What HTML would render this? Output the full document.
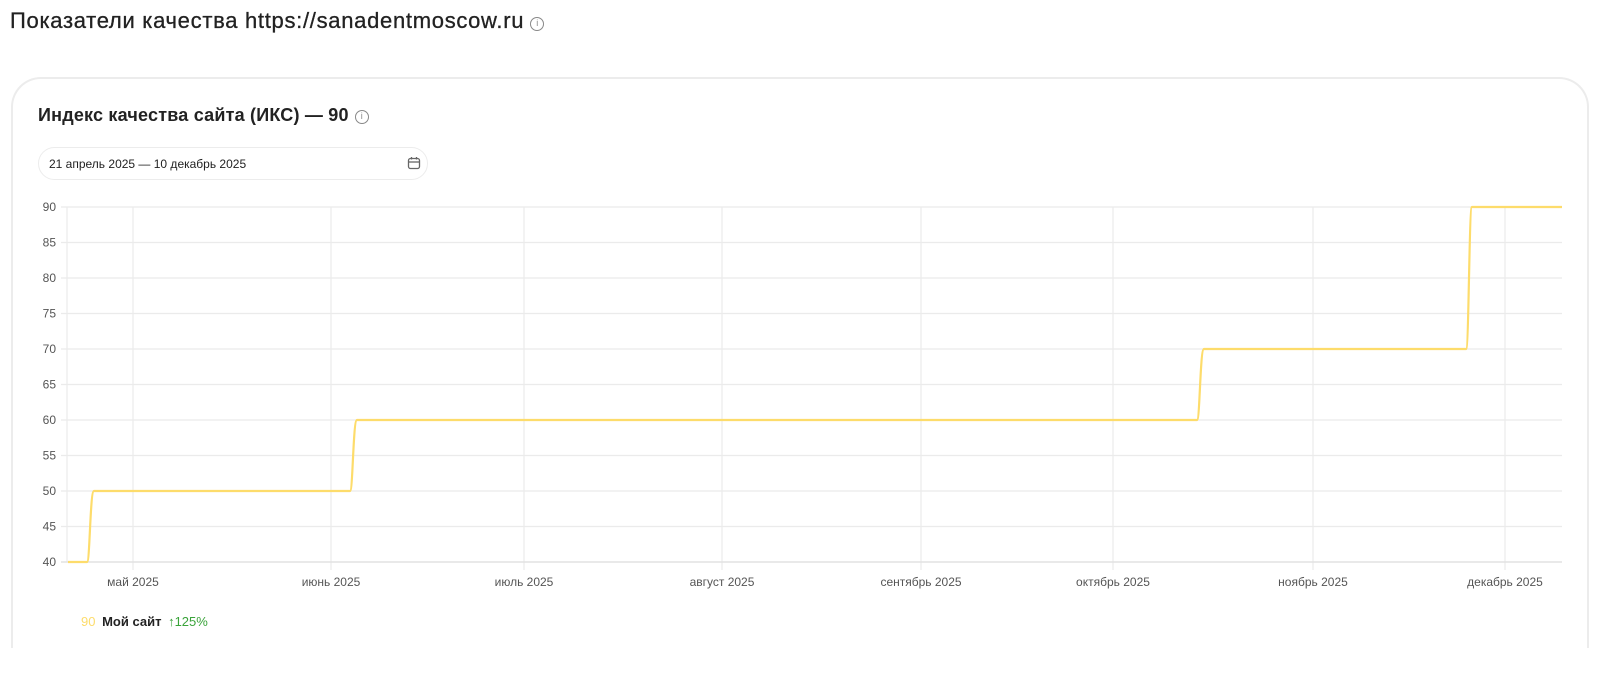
<!DOCTYPE html>
<html><head><meta charset="utf-8">
<style>
*{margin:0;padding:0;box-sizing:border-box}
body{width:1598px;height:688px;background:#fff;font-family:"Liberation Sans",Arial,sans-serif;position:relative;overflow:hidden;color:#222}
.title{position:absolute;left:10px;top:8px;font-size:22px;color:#222;white-space:nowrap;letter-spacing:0.7px;-webkit-text-stroke:0.3px #222}
.card{position:absolute;left:11px;top:77px;width:1578px;height:600px;border:2px solid #ececec;border-bottom:none;border-radius:30px 30px 0 0}
.fade{position:absolute;left:0;top:648px;width:1598px;height:40px;background:#fff}
.sub{position:absolute;left:38px;top:105px;font-size:18px;font-weight:bold;color:#222;white-space:nowrap;letter-spacing:0.2px}
.pill{position:absolute;left:38px;top:147px;width:390px;height:33px;border:1px solid #ececec;border-radius:17px;font-size:12px;color:#222;padding:9px 0 0 10px}
.info{display:inline-block;width:14px;height:14px;border:1.3px solid #888;border-radius:50%;font-size:9px;line-height:11px;text-align:center;color:#888;font-weight:normal;vertical-align:2px;margin-left:6px;letter-spacing:0;-webkit-text-stroke:0}
svg{position:absolute;left:0;top:0}
.legend{position:absolute;left:81px;top:614px;font-size:13px;white-space:nowrap}
</style></head><body>
<div class="title">Показатели качества https://sanadentmoscow.ru<span class="info">i</span></div>
<div class="card"></div>
<div class="fade"></div>
<div class="sub">Индекс качества сайта (ИКС) — 90<span class="info">i</span></div>
<div class="pill">21 апрель 2025 — 10 декабрь 2025
<svg style="left:368px;top:8px" width="14" height="14" viewBox="0 0 14 14"><rect x="1.5" y="2.5" width="11" height="10" rx="2" fill="none" stroke="#666" stroke-width="1.3"/><line x1="1.5" y1="6" x2="12.5" y2="6" stroke="#666" stroke-width="1.3"/><line x1="4.5" y1="1" x2="4.5" y2="3.5" stroke="#666" stroke-width="1.3"/><line x1="9.5" y1="1" x2="9.5" y2="3.5" stroke="#666" stroke-width="1.3"/></svg>
</div>
<svg width="1598" height="688" viewBox="0 0 1598 688">
<g stroke="#ebebeb" stroke-width="1.2">
<line x1="61" y1="207" x2="1562" y2="207"/><line x1="61" y1="242.5" x2="1562" y2="242.5"/><line x1="61" y1="278" x2="1562" y2="278"/><line x1="61" y1="313.5" x2="1562" y2="313.5"/><line x1="61" y1="349" x2="1562" y2="349"/><line x1="61" y1="384.5" x2="1562" y2="384.5"/><line x1="61" y1="420" x2="1562" y2="420"/><line x1="61" y1="455.5" x2="1562" y2="455.5"/><line x1="61" y1="491" x2="1562" y2="491"/><line x1="61" y1="526.5" x2="1562" y2="526.5"/>
<line x1="133" y1="207" x2="133" y2="570"/><line x1="331" y1="207" x2="331" y2="570"/><line x1="524" y1="207" x2="524" y2="570"/><line x1="722" y1="207" x2="722" y2="570"/><line x1="921" y1="207" x2="921" y2="570"/><line x1="1113" y1="207" x2="1113" y2="570"/><line x1="1313" y1="207" x2="1313" y2="570"/><line x1="1505" y1="207" x2="1505" y2="570"/>
<line x1="67" y1="207" x2="67" y2="562"/>
</g>
<line x1="61" y1="562" x2="1562" y2="562" stroke="#e2e2e2" stroke-width="1.5"/>
<g font-family="Liberation Sans,Arial,sans-serif" font-size="12" fill="#555" text-anchor="end">
<text x="56" y="211">90</text><text x="56" y="246.5">85</text><text x="56" y="282">80</text><text x="56" y="317.5">75</text><text x="56" y="353">70</text><text x="56" y="388.5">65</text><text x="56" y="424">60</text><text x="56" y="459.5">55</text><text x="56" y="495">50</text><text x="56" y="530.5">45</text><text x="56" y="566">40</text>
</g>
<g font-family="Liberation Sans,Arial,sans-serif" font-size="12" fill="#555" text-anchor="middle">
<text x="133" y="586">май 2025</text><text x="331" y="586">июнь 2025</text><text x="524" y="586">июль 2025</text><text x="722" y="586">август 2025</text><text x="921" y="586">сентябрь 2025</text><text x="1113" y="586">октябрь 2025</text><text x="1313" y="586">ноябрь 2025</text><text x="1505" y="586">декабрь 2025</text>
</g>
<path d="M68 562 L87 562 C90 562 90 491 94 491 L350 491 C353 491 353 420 357 420 L1197 420 C1200 420 1200 349 1204 349 L1466 349 C1469 349 1469 207 1472 207 L1562 207" fill="none" stroke="#fddc6b" stroke-width="2.2"/>
</svg>
<div class="legend"><span style="color:#fddc6b">90</span> <b style="color:#222;margin-left:3px">Мой сайт</b> <span style="color:#3aa33a;margin-left:3px">↑125%</span></div>
</body></html>
